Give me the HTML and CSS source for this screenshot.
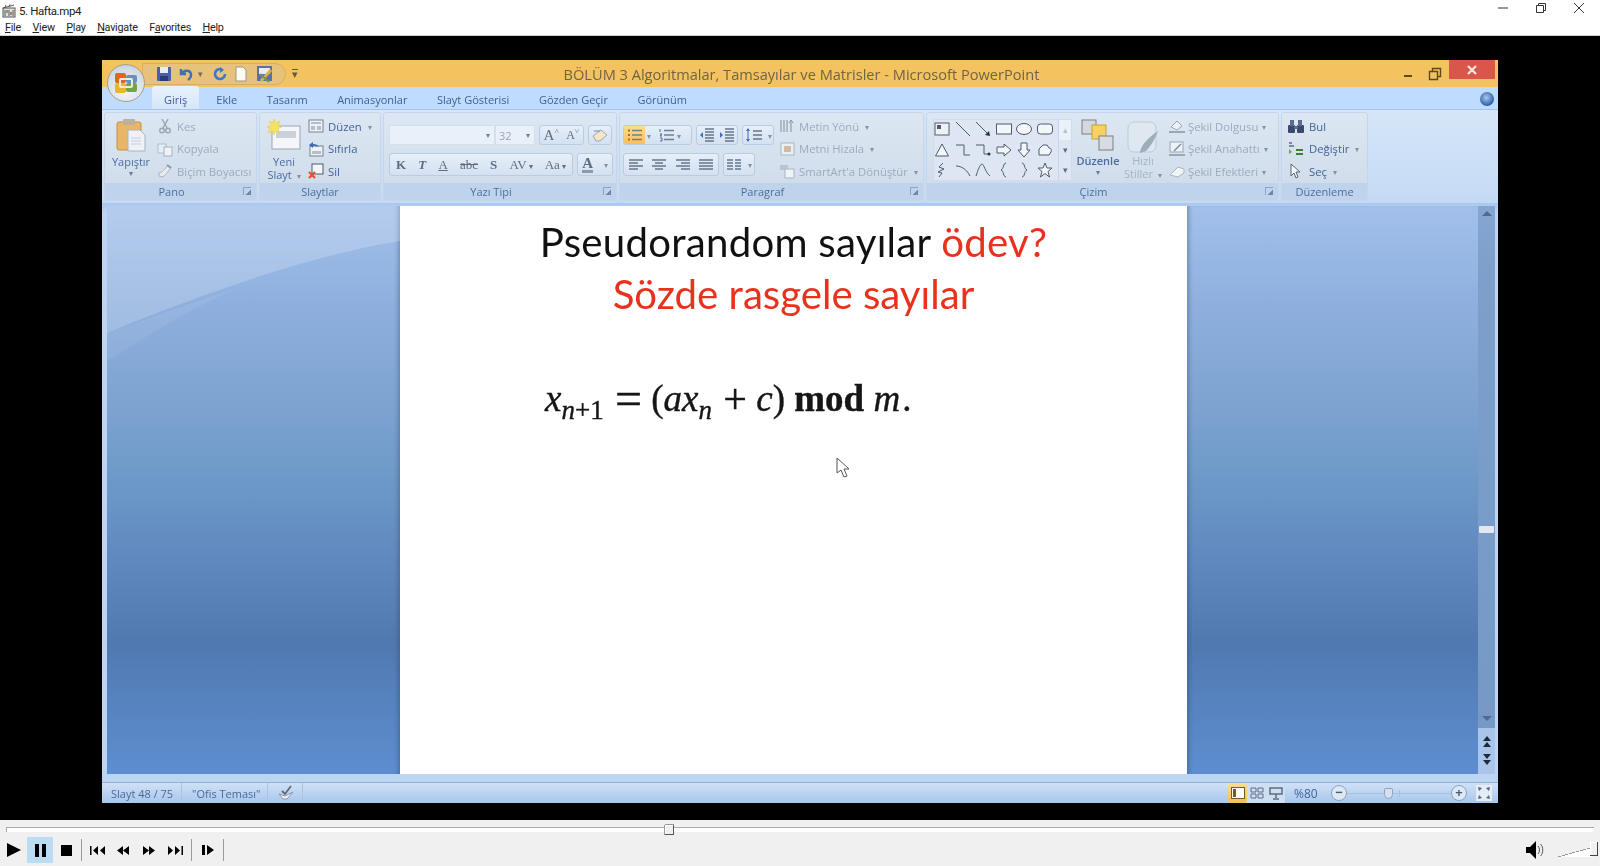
FILE: index.html

```html
<!DOCTYPE html>
<html lang="en">

<head>
    <meta charset="UTF-8">
    <meta name="viewport" content="width=device-width, initial-scale=1.0">
    <title>5. Hafta.mp4</title>
    <link rel="stylesheet" href="styles.css">
</head>

<body>
    <!-- player window chrome -->
    <header class="player-title">
        <svg class="app-icon" width="14" height="14" viewBox="0 0 14 14"><rect x="1" y="4" width="12" height="9" fill="#dfe3e6" stroke="#555"/><path d="M1 4l11-3M3 3.5l1-2.5M7 2.5l1-2M3 6v6M7 6v6M11 6v6" stroke="#555" fill="none"/><rect x="4" y="6" width="2" height="3" fill="#7fa66a"/><rect x="8" y="8" width="2" height="3" fill="#c07a55"/></svg>
        <span class="player-name">5. Hafta.mp4</span>
        <div class="win-buttons">
            <svg width="12" height="12" viewBox="0 0 12 12"><path d="M1 6h10" stroke="#333"/></svg>
            <svg width="12" height="12" viewBox="0 0 12 12"><path d="M1.5 3.5h7v7h-7zM3.5 3.5v-2h7v7h-2" stroke="#333" fill="none"/></svg>
            <svg width="12" height="12" viewBox="0 0 12 12"><path d="M1 1l10 10M11 1L1 11" stroke="#333" fill="none"/></svg>
        </div>
    </header>
    <nav class="player-menu">
        <span><u>F</u>ile</span>
        <span><u>V</u>iew</span>
        <span><u>P</u>lay</span>
        <span><u>N</u>avigate</span>
        <span>F<u>a</u>vorites</span>
        <span><u>H</u>elp</span>
    </nav>

    <main class="stage">
        <div class="ppt">
            <div class="office-btn">
                <svg width="28" height="28" viewBox="0 0 28 28">
                    <rect x="3" y="4" width="11" height="10" rx="2" fill="#d9672a"/>
                    <rect x="14" y="6" width="11" height="8" rx="2" fill="#5d93c9"/>
                    <rect x="3" y="14" width="11" height="10" rx="2" fill="#e7b52f"/>
                    <rect x="14" y="14" width="11" height="9" rx="2" fill="#73a63f"/>
                    <rect x="8" y="10" width="12" height="8" rx="1" fill="none" stroke="#f3ead2" stroke-width="2"/>
                </svg>
            </div>

            <div class="ppt-title">
                <div class="qat">
                    <svg width="16" height="16" viewBox="0 0 16 16"><rect x="1" y="1" width="14" height="14" rx="1" fill="#4a5fa8"/><rect x="4" y="1" width="8" height="6" fill="#e8edf5"/><rect x="4" y="10" width="8" height="5" fill="#2b3a78"/></svg>
                    <svg width="16" height="16" viewBox="0 0 16 16"><path d="M3 3v5h5M3.5 8C6 3.5 12 4 13 8c.5 2.5-1 4.5-3 6" stroke="#3f6fb5" stroke-width="2.4" fill="none"/></svg>
                    <span class="qat-arrow">▾</span>
                    <svg width="16" height="16" viewBox="0 0 16 16"><path d="M13 8a5 5 0 1 1-3-4.600" stroke="#3f78c9" stroke-width="2.6" fill="none"/><path d="M8 1l4 3-4 3z" fill="#3f78c9"/></svg>
                    <svg width="14" height="16" viewBox="0 0 14 16"><path d="M2 1h7l3 3v11H2z" fill="#fbfbf4" stroke="#9a9a80"/></svg>
                    <svg class="qat-last" width="18" height="18" viewBox="0 0 18 18"><rect x="1" y="1" width="15" height="15" fill="#5e6fa8"/><rect x="3" y="3" width="11" height="6" fill="#e8edf5"/><path d="M5 16L15 5" stroke="#d6b24a" stroke-width="3"/><path d="M4 9l9 8" stroke="#6f9a4c" stroke-width="2"/></svg>
                </div>
                <span class="qat-custom">▾</span>
                <span class="ppt-name">BÖLÜM 3 Algoritmalar, Tamsayılar ve Matrisler - Microsoft PowerPoint</span>
                <div class="ppt-controls">
                    <svg width="12" height="12" viewBox="0 0 12 12"><path d="M2 8h8" stroke="#5c4a1e" stroke-width="2"/></svg>
                    <svg width="14" height="14" viewBox="0 0 14 14"><path d="M1.500 4.500h8v8h-8zM4.500 4.500v-3h8v8h-3" stroke="#5c4a1e" stroke-width="1.400" fill="none"/></svg>
                    <div class="ppt-close"><svg width="10" height="10" viewBox="0 0 10 10"><path d="M1 1l8 8M9 1L1 9" stroke="#fbe6df" stroke-width="2.200"/></svg></div>
                </div>
            </div>

            <div class="tabs">
                <span class="tab tab-active">Giriş</span>
                <span class="tab">Ekle</span>
                <span class="tab">Tasarım</span>
                <span class="tab">Animasyonlar</span>
                <span class="tab">Slayt Gösterisi</span>
                <span class="tab">Gözden Geçir</span>
                <span class="tab">Görünüm</span>
                <span class="help-btn"></span>
            </div>

            <div class="ribbon">
                <!-- Pano -->
                <section class="group group-pano">
                    <div class="group-body">
                        <div class="big big-paste">
                            <svg width="30" height="34" viewBox="0 0 30 34"><rect x="1" y="4" width="24" height="28" rx="2" fill="#e9b569" stroke="#c48f45"/><rect x="7" y="1" width="12" height="6" rx="1" fill="#b9b2a0"/><path d="M12 12h12l5 5v16H12z" fill="#eef2f7" stroke="#a9b4c2"/><path d="M15 20h10M15 23h10M15 26h10" stroke="#c2ccd8"/></svg>
                            <span class="cmd-text blue">Yapıştır</span>
                            <span class="caret">▾</span>
                        </div>
                        <div class="cmds">
                            <div class="cmd off"><svg width="16" height="16" viewBox="0 0 16 16"><path d="M5 1l5 9M11 1L6 10" stroke="#9aa6b4" stroke-width="1.500"/><circle cx="5" cy="12.500" r="2.300" fill="none" stroke="#9aa6b4" stroke-width="1.400"/><circle cx="11" cy="12.500" r="2.300" fill="none" stroke="#9aa6b4" stroke-width="1.400"/></svg><span>Kes</span></div>
                            <div class="cmd off"><svg width="16" height="16" viewBox="0 0 16 16"><rect x="1" y="3" width="8" height="9" fill="#e6edf5" stroke="#b4bfcc"/><rect x="7" y="6" width="8" height="9" fill="#eef3f8" stroke="#a6b2c0"/></svg><span>Kopyala</span></div>
                            <div class="cmd off"><svg width="16" height="16" viewBox="0 0 16 16"><path d="M2 10c3 0 6-4 9-8l3 2c-2 4-5 7-8 10l-4-1z" fill="#e8edf3" stroke="#aab5c2"/><path d="M10 2l4 3" stroke="#8f9aa8" stroke-width="2"/></svg><span>Biçim Boyacısı</span></div>
                        </div>
                    </div>
                    <footer class="group-label has-launcher">Pano<i class="launcher"></i></footer>
                </section>

                <!-- Slaytlar -->
                <section class="group group-slides">
                    <div class="group-body">
                        <div class="big big-slide">
                            <svg width="34" height="32" viewBox="0 0 34 32"><rect x="5" y="7" width="28" height="23" fill="#f4f6f9" stroke="#9aa5b3"/><rect x="9" y="12" width="20" height="7" fill="#c9d1db"/><path d="M7 0l1.500 4L13 2l-2 4.500L15 8l-4 1.500L13 14l-4.500-2L7 16l-1.500-4L1 14l2-4.500L0 8l4-1.500L2 2l4 2z" fill="#f6e35c" stroke="#e9c53d" stroke-width=".5"/></svg>
                            <span class="cmd-text blue">Yeni</span>
                            <span class="cmd-text blue">Slayt <span class="caret-in">▾</span></span>
                        </div>
                        <div class="cmds">
                            <div class="cmd"><svg width="16" height="16" viewBox="0 0 16 16"><rect x="1" y="2" width="14" height="12" fill="#eef2f7" stroke="#77828f"/><rect x="3" y="4" width="10" height="2" fill="#b5bfca"/><rect x="3" y="8" width="4" height="4" fill="#b5bfca"/><rect x="9" y="8" width="4" height="4" fill="#b5bfca"/></svg><span>Düzen</span><span class="caret-in">▾</span></div>
                            <div class="cmd"><svg width="16" height="16" viewBox="0 0 16 16"><rect x="2" y="5" width="13" height="10" fill="#eef2f7" stroke="#77828f"/><rect x="4" y="10" width="9" height="3" fill="#b5bfca"/><path d="M1 4l4-3v2c3 0 5 1 6 3-2-1-4-1-6-1v2z" fill="#3c68b5"/></svg><span>Sıfırla</span></div>
                            <div class="cmd"><svg width="16" height="16" viewBox="0 0 16 16"><rect x="4" y="1" width="11" height="10" fill="#f3f5f8" stroke="#4e5a70"/><path d="M1 9l6 6M7 9l-6 6" stroke="#e2502e" stroke-width="2.200"/></svg><span>Sil</span></div>
                        </div>
                    </div>
                    <footer class="group-label">Slaytlar</footer>
                </section>

                <!-- Yazı Tipi -->
                <section class="group group-font">
                    <div class="group-body rows">
                        <div class="tool-row">
                            <div class="field field-font"><span class="caret">▾</span></div>
                            <div class="field field-size"><span class="field-val">32</span><span class="caret">▾</span></div>
                            <div class="btn-group grow-btn"><span class="serif big-a">A<sup>˄</sup></span><span class="serif small-a">A<sup>˅</sup></span></div>
                            <div class="btn-group clear-btn"><svg width="18" height="16" viewBox="0 0 18 16"><path d="M2 9l8-6 6 5-7 6H5z" fill="#f4e6c4" stroke="#9aa7b8"/><path d="M3 4h6" stroke="#6d86b0"/></svg></div>
                        </div>
                        <div class="tool-row">
                            <div class="btn-group fmt-btns">
                                <b class="serif">K</b>
                                <i class="serif"><b>T</b></i>
                                <u class="serif">A</u>
                                <s class="serif">abc</s>
                                <b class="serif">S</b>
                                <span class="serif av">AV<span class="caret-in">▾</span></span>
                                <span class="serif aa">Aa<span class="caret-in">▾</span></span>
                            </div>
                            <div class="btn-group color-btn"><span class="serif color-a">A</span><span class="caret-in">▾</span></div>
                        </div>
                    </div>
                    <footer class="group-label has-launcher">Yazı Tipi<i class="launcher"></i></footer>
                </section>

                <!-- Paragraf -->
                <section class="group group-para">
                    <div class="group-body para-body">
                        <div class="rows">
                            <div class="tool-row">
                                <div class="btn-group list-btn">
                                    <span class="ico-on"><svg width="16" height="14" viewBox="0 0 16 14"><path d="M5 2.500h10M5 7h10M5 11.500h10" stroke="#6f7f93" stroke-width="1.600"/><path d="M1 2.500h2M1 7h2M1 11.500h2" stroke="#d25a1e" stroke-width="2"/></svg></span>
                                    <span class="caret-in">▾</span>
                                    <span class="ico"><svg width="16" height="14" viewBox="0 0 16 14"><path d="M5 2.500h10M5 7h10M5 11.500h10" stroke="#6f7f93" stroke-width="1.600"/><path d="M1 1v3M1 6h2l-2 2h2M1 10h2v3H1" stroke="#4f6b9c" fill="none"/></svg></span>
                                    <span class="caret-in">▾</span>
                                </div>
                                <div class="btn-group indent-btn">
                                    <svg width="16" height="14" viewBox="0 0 16 14"><path d="M6 1h9M6 4h9M6 7h9M6 10h9M6 13h9" stroke="#66758a" stroke-width="1.300"/><path d="M4 4L1 7l3 3z" fill="#3f6fb5"/></svg>
                                    <svg width="16" height="14" viewBox="0 0 16 14"><path d="M6 1h9M6 4h9M6 7h9M6 10h9M6 13h9" stroke="#66758a" stroke-width="1.300"/><path d="M1 4l3 3-3 3z" fill="#3f6fb5"/></svg>
                                </div>
                                <div class="btn-group spacing-btn">
                                    <svg width="18" height="14" viewBox="0 0 18 14"><path d="M3 1v12" stroke="#3f6fb5"/><path d="M1 3l2-3 2 3zM1 11l2 3 2-3z" fill="#3f6fb5"/><path d="M8 3h9M8 7h9M8 11h9" stroke="#66758a" stroke-width="1.400"/></svg>
                                    <span class="caret-in">▾</span>
                                </div>
                            </div>
                            <div class="tool-row">
                                <div class="btn-group align-btn">
                                    <svg width="16" height="14" viewBox="0 0 16 14"><path d="M1 2h14M1 5h9M1 8h14M1 11h9" stroke="#66758a" stroke-width="1.500"/></svg>
                                    <svg width="16" height="14" viewBox="0 0 16 14"><path d="M1 2h14M4 5h8M1 8h14M4 11h8" stroke="#66758a" stroke-width="1.500"/></svg>
                                    <svg width="16" height="14" viewBox="0 0 16 14"><path d="M1 2h14M6 5h9M1 8h14M6 11h9" stroke="#66758a" stroke-width="1.500"/></svg>
                                    <svg width="16" height="14" viewBox="0 0 16 14"><path d="M1 2h14M1 5h14M1 8h14M1 11h14" stroke="#66758a" stroke-width="1.500"/></svg>
                                </div>
                                <div class="btn-group col-btn">
                                    <svg width="16" height="14" viewBox="0 0 16 14"><path d="M1 2h6M9 2h6M1 5h6M9 5h6M1 8h6M9 8h6M1 11h6M9 11h6" stroke="#66758a" stroke-width="1.500"/></svg>
                                    <span class="caret-in">▾</span>
                                </div>
                            </div>
                        </div>
                        <div class="cmds para-cmds">
                            <div class="cmd off"><svg width="16" height="16" viewBox="0 0 16 16"><path d="M2 2v12M5 2v12M8 2v12" stroke="#7f8ea2"/><path d="M12 14V4M10 5l2-3 2 3" stroke="#7f8ea2" fill="none"/></svg><span>Metin Yönü</span><span class="caret-in">▾</span></div>
                            <div class="cmd off"><svg width="16" height="16" viewBox="0 0 16 16"><rect x="2" y="2" width="13" height="12" fill="#eaf0f6" stroke="#a9b5c3"/><path d="M5 6h7M5 8h7M5 10h7" stroke="#b2894f"/></svg><span>Metni Hizala</span><span class="caret-in">▾</span></div>
                            <div class="cmd off"><svg width="16" height="16" viewBox="0 0 16 16"><path d="M1 2h8v5H1z" fill="#b8c4d2"/><rect x="6" y="6" width="9" height="9" fill="#eef3f8" stroke="#a9b5c3"/></svg><span>SmartArt'a Dönüştür</span><span class="caret-in">▾</span></div>
                        </div>
                    </div>
                    <footer class="group-label has-launcher">Paragraf<i class="launcher"></i></footer>
                </section>

                <!-- Çizim -->
                <section class="group group-draw">
                    <div class="group-body draw-body">
                        <div class="shapes">
                            <div class="shape-grid">
                                <svg viewBox="0 0 16 16"><rect x="1" y="2" width="14" height="12" fill="#eef2f7" stroke="#4e5b6e"/><rect x="3" y="4" width="4" height="4" fill="#4e5b6e"/></svg>
                                <svg viewBox="0 0 16 16"><path d="M1 1l14 14" stroke="#4e5b6e"/></svg>
                                <svg viewBox="0 0 16 16"><path d="M1 1l12 12" stroke="#4e5b6e"/><path d="M15 15l-5-1 4-4z" fill="#26303e"/></svg>
                                <svg viewBox="0 0 16 16"><rect x=".5" y="3" width="15" height="10" fill="#f3f6fa" stroke="#4e5b6e"/></svg>
                                <svg viewBox="0 0 16 16"><ellipse cx="8" cy="8" rx="7.500" ry="5.500" fill="#f3f6fa" stroke="#4e5b6e"/></svg>
                                <svg viewBox="0 0 16 16"><rect x=".5" y="3" width="15" height="10" rx="3" fill="#f3f6fa" stroke="#4e5b6e"/></svg>
                                <svg viewBox="0 0 16 16"><path d="M8 2l6.500 12h-13z" fill="#f3f6fa" stroke="#4e5b6e"/></svg>
                                <svg viewBox="0 0 16 16"><path d="M1 3h8v10h6" fill="none" stroke="#4e5b6e"/></svg>
                                <svg viewBox="0 0 16 16"><path d="M1 3h8v9h4" fill="none" stroke="#4e5b6e"/><circle cx="14" cy="12" r="1.500" fill="#26303e"/></svg>
                                <svg viewBox="0 0 16 16"><path d="M1 5h7V2l7 6-7 6v-3H1z" fill="#f3f6fa" stroke="#4e5b6e"/></svg>
                                <svg viewBox="0 0 16 16"><path d="M5 1h6v7h3l-6 7-6-7h3z" fill="#f3f6fa" stroke="#4e5b6e"/></svg>
                                <svg viewBox="0 0 16 16"><path d="M2 13V7l4-4h4l2 3c2 0 3 2 2 4l-2 3z" fill="#f3f6fa" stroke="#4e5b6e"/></svg>
                                <svg viewBox="0 0 16 16"><path d="M9 1L5 5l5 2-6 3 4 1-3 4" fill="none" stroke="#4e5b6e"/></svg>
                                <svg viewBox="0 0 16 16"><path d="M1 4c6 0 11 4 14 10" fill="none" stroke="#4e5b6e"/></svg>
                                <svg viewBox="0 0 16 16"><path d="M1 14C3 8 5 2 7 2s3 8 8 12" fill="none" stroke="#4e5b6e"/></svg>
                                <svg viewBox="0 0 16 16"><path d="M10 1C7 1 8 7 5 8c3 1 2 7 5 7" fill="none" stroke="#4e5b6e"/></svg>
                                <svg viewBox="0 0 16 16"><path d="M6 1c3 0 2 6 5 7-3 1-2 7-5 7" fill="none" stroke="#4e5b6e"/></svg>
                                <svg viewBox="0 0 16 16"><path d="M8 1l2 5h5l-4 3.500L12.500 15 8 11.500 3.500 15 5 9.500 1 6h5z" fill="#f3f6fa" stroke="#4e5b6e"/></svg>
                            </div>
                            <div class="shape-scroll">
                                <span class="up">▴</span>
                                <span>▾</span>
                                <span>▾</span>
                            </div>
                        </div>
                        <div class="big big-arrange">
                            <svg width="34" height="32" viewBox="0 0 34 32"><rect x="1" y="1" width="14" height="14" fill="#d4d8dd" stroke="#7a8088"/><rect x="11" y="6" width="14" height="14" fill="#f5d35e" stroke="#c2a23a"/><rect x="18" y="17" width="14" height="14" fill="#d8dce0" stroke="#7a8088"/></svg>
                            <span class="cmd-text blue arrange-label">Düzenle</span>
                            <span class="caret">▾</span>
                        </div>
                        <div class="big big-quick">
                            <svg width="34" height="34" viewBox="0 0 34 34"><rect x="2" y="1" width="28" height="30" rx="6" fill="#dfe8f1" stroke="#bcc9d6"/><path d="M14 32c0-6 6-14 18-22-4 10-8 16-12 20z" fill="#9eacbb"/></svg>
                            <span class="cmd-text">Hızlı</span>
                            <span class="cmd-text">Stiller <span class="caret-in">▾</span></span>
                        </div>
                        <div class="cmds">
                            <div class="cmd off"><svg width="18" height="16" viewBox="0 0 18 16"><path d="M3 9l6-6 5 5-5 4z" fill="#eef2f6" stroke="#98a5b4"/><rect x="1" y="13" width="16" height="2" fill="#9aa7b6"/></svg><span>Şekil Dolgusu</span><span class="caret-in">▾</span></div>
                            <div class="cmd off"><svg width="18" height="16" viewBox="0 0 18 16"><rect x="2" y="1" width="13" height="10" fill="#eef2f6" stroke="#98a5b4"/><path d="M6 10l7-7" stroke="#7f8c9c" stroke-width="1.500"/><rect x="1" y="13" width="16" height="2" fill="#9aa7b6"/></svg><span>Şekil Anahattı</span><span class="caret-in">▾</span></div>
                            <div class="cmd off"><svg width="18" height="16" viewBox="0 0 18 16"><path d="M2 12l8-8 6 2v4l-6 4z" fill="#f1f4f7" stroke="#aab6c3"/></svg><span>Şekil Efektleri</span><span class="caret-in">▾</span></div>
                        </div>
                    </div>
                    <footer class="group-label has-launcher">Çizim<i class="launcher"></i></footer>
                </section>

                <!-- Düzenleme -->
                <section class="group group-edit">
                    <div class="group-body">
                        <div class="cmds">
                            <div class="cmd"><svg width="18" height="16" viewBox="0 0 18 16"><rect x="1" y="7" width="7" height="8" rx="1" fill="#3a4a6a"/><rect x="10" y="7" width="7" height="8" rx="1" fill="#3a4a6a"/><rect x="3" y="2" width="4" height="6" fill="#5b6c8c"/><rect x="11" y="2" width="4" height="6" fill="#5b6c8c"/><rect x="7" y="8" width="4" height="3" fill="#5b6c8c"/></svg><span>Bul</span></div>
                            <div class="cmd"><svg width="18" height="16" viewBox="0 0 18 16"><path d="M2 5h5M2 2h3" stroke="#5b6c8c" stroke-width="1.500"/><path d="M2 8l3 3-3 2z" fill="#6fa64a"/><path d="M9 9h7M9 13h7" stroke="#3f7d30" stroke-width="2"/></svg><span>Değiştir</span><span class="caret-in">▾</span></div>
                            <div class="cmd"><svg width="18" height="16" viewBox="0 0 18 16"><path d="M4 1v12l3-3 2 5 2-1-2-5h4z" fill="#f5f7fa" stroke="#56657a"/></svg><span>Seç</span><span class="caret-in">▾</span></div>
                        </div>
                    </div>
                    <footer class="group-label">Düzenleme</footer>
                </section>
            </div>

            <div class="workspace">
                <div class="side side-left"></div>
                <article class="slide">
                    <h1 class="slide-title slide-title-first">Pseudorandom sayılar <span class="red">ödev?</span></h1>
                    <h2 class="slide-title red">Sözde rasgele sayılar</h2>
                    <p class="formula"><i>x</i><sub><i>n</i>+1</sub> <span class="op op-eq">=</span> (<i>ax</i><sub><i>n</i></sub> <span class="op">+</span> <i>c</i>) <b>mod</b> <i>m</i> <span class="dot">.</span></p>
                    <svg class="cursor" width="14" height="21" viewBox="0 0 14 21"><path d="M1 1v15l4-3 3 7 3-1-3-7h5z" fill="#fff" stroke="#555"/></svg>
                </article>
                <div class="side side-right"></div>
                <div class="scroll">
                    <span class="scroll-up"></span>
                    <span class="scroll-thumb"></span>
                    <span class="scroll-down"></span>
                    <div class="scroll-pages">
                        <svg width="10" height="13" viewBox="0 0 10 13"><path d="M5 0l4 5H1zM5 6l4 5H1z" fill="#1d2a3c"/></svg>
                        <svg width="10" height="13" viewBox="0 0 10 13"><path d="M1 1h8L5 6zM1 7h8l-4 5z" fill="#1d2a3c"/></svg>
                    </div>
                </div>
            </div>

            <footer class="status">
                <span class="st-item st-slide">Slayt 48 / 75</span>
                <span class="st-item st-theme">"Ofis Teması"</span>
                <span class="st-item st-check"><svg width="18" height="16" viewBox="0 0 18 16"><path d="M2 9l6 2 8-4-6 7H6z" fill="#eef1f5" stroke="#8c97a4"/><path d="M5 6l3 3 6-8" stroke="#5d6a7a" stroke-width="1.800" fill="none"/></svg></span>
                <span class="st-fill"></span>
                <div class="views">
                    <span class="view view-on"><svg width="14" height="12" viewBox="0 0 14 12"><rect x=".5" y=".5" width="13" height="11" fill="#fff" stroke="#7b5a20"/><rect x="2" y="2" width="3" height="8" fill="#7b5a20"/></svg></span>
                    <span class="view"><svg width="14" height="12" viewBox="0 0 14 12"><path d="M1 1h5v4H1zM8 1h5v4H8zM1 7h5v4H1zM8 7h5v4H8z" fill="none" stroke="#5f6d80"/></svg></span>
                    <span class="view"><svg width="14" height="13" viewBox="0 0 14 13"><rect x="1" y="1" width="12" height="6" fill="none" stroke="#5f6d80" stroke-width="1.500"/><path d="M7 7v4M4 12h6" stroke="#5f6d80" stroke-width="1.500"/></svg></span>
                </div>
                <span class="zoom-val">%80</span>
                <div class="zoom-slider">
                    <span class="zoom-round">−</span>
                    <div class="zoom-track"><span class="zoom-tick"></span><span class="zoom-thumb"></span></div>
                    <span class="zoom-round">+</span>
                </div>
                <span class="fit-btn"><svg width="14" height="14" viewBox="0 0 14 14"><path d="M1 1l4 1-3 3zM13 1l-1 4-3-3zM1 13l1-4 3 3zM13 13l-4-1 3-3z" fill="#55657a"/></svg></span>
            </footer>
        </div>
    </main>

    <footer class="controls">
        <div class="seek"><span class="seek-thumb"></span></div>
        <div class="buttons">
            <span class="ctl ctl-play"><svg width="14" height="14" viewBox="0 0 14 14"><path d="M0 0l14 7-14 7z"/></svg></span>
            <span class="ctl ctl-pause"><svg width="11" height="13" viewBox="0 0 11 13"><path d="M0 0h4v13H0zM7 0h4v13H7z"/></svg></span>
            <span class="ctl ctl-stop"><svg width="11" height="11" viewBox="0 0 11 11"><path d="M0 0h11v11H0z"/></svg></span>
            <i class="sep sep-a"></i>
            <span class="ctl ctl-step"><svg width="15" height="9" viewBox="0 0 15 9"><path d="M0 0h1.500v9H0zM8 0v9L3 4.500zM15 0v9l-5-4.500z"/></svg></span>
            <span class="ctl ctl-step"><svg width="12" height="9" viewBox="0 0 12 9"><path d="M6 0v9L0 4.500zM12 0v9L6 4.500z"/></svg></span>
            <span class="ctl ctl-step"><svg width="12" height="9" viewBox="0 0 12 9"><path d="M0 0v9l6-4.500zM6 0v9l6-4.500z"/></svg></span>
            <span class="ctl ctl-step"><svg width="15" height="9" viewBox="0 0 15 9"><path d="M0 0v9l5-4.500zM7 0v9l5-4.500zM13.500 0H15v9h-1.500z"/></svg></span>
            <i class="sep sep-b"></i>
            <span class="ctl ctl-frame"><svg width="12" height="10" viewBox="0 0 12 10"><path d="M0 0h3v10H0zM5 0v10l7-5z"/></svg></span>
            <i class="sep sep-c"></i>
            <span class="ctl-fill"></span>
            <svg class="speaker" width="20" height="18" viewBox="0 0 20 18"><path d="M0 6h4l6-6v18l-6-6H0z"/><path d="M12 5c2 2 2 6 0 8M14.500 3c3 3 3 9 0 12" stroke="#555" fill="none"/></svg>
            <div class="volume"><span class="vol-line"></span><span class="vol-thumb"></span></div>
        </div>
    </footer>
</body>

</html>
```

FILE: styles.css

```css
* {
    box-sizing: border-box;
}

html,
body {
    height: 100%;
}

body {
    margin: 0;
    font-family: "Open Sans", "Noto Sans", sans-serif;
    background: #000;
    overflow: hidden;
}

svg {
    display: block;
    flex: none;
}

/* player chrome */
.player-title {
    display: flex;
    align-items: center;
    height: 21px;
    padding-left: 2px;
    background: #fff;
    font-family: Roboto, sans-serif;
    font-size: 11.5px;
    color: #222;
}

.player-name {
    margin-left: 3px;
    letter-spacing: -0.4px;
}

.win-buttons {
    margin-left: auto;
    display: flex;
    gap: 26px;
    padding-right: 15px;
    margin-top: -5px;
}

.player-menu {
    display: flex;
    align-items: center;
    height: 15px;
    padding: 0 0 2px 5px;
    background: #fff;
    border-bottom: 1px solid #d0d0d0;
    font-family: Roboto, sans-serif;
    font-size: 10.8px;
    letter-spacing: -0.25px;
    color: #222;
    gap: 11.5px;
}

.stage {
    height: 784px;
    background: #000;
    padding: 24px 102px 17px;
}

.controls {
    height: 46px;
    background: #f0f0f0;
    position: relative;
}

/* powerpoint window */
.ppt {
    position: relative;
    display: flex;
    flex-direction: column;
    height: 743px;
    background: #bdd5f3;
    filter: blur(0.45px);
    font-size: 11px;
    color: #41639a;
}

.ppt-title {
    display: flex;
    align-items: center;
    height: 27px;
    background: #f4c25e;
    padding-left: 40px;
}

.office-btn {
    position: absolute;
    left: 5px;
    top: 4px;
    width: 38px;
    height: 38px;
    border-radius: 50%;
    border: 1px solid #a8a08a;
    background: radial-gradient(circle at 50% 70%, #f4f7fb, #cfd9e4 75%, #97a2ad);
    display: flex;
    align-items: center;
    justify-content: center;
    z-index: 2;
}

.qat {
    display: flex;
    flex: none;
    align-items: center;
    gap: 6px;
    height: 22px;
    padding: 0 0 0 13px;
    border-radius: 0 11px 11px 0;
    background: #e7c27a;
    border: 1px solid #d8ae5d;
    width: 144px;
}

.qat-arrow {
    font-size: 9px;
    color: #6d6a5c;
    margin: 0 3px 0 -2px;
}

.qat-last {
    margin-left: 2px;
}

.qat-custom {
    flex: none;
    font-size: 11px;
    color: #5c5a50;
    margin-left: 6px;
    border-top: 1px solid #5c5a50;
    line-height: 8px;
}

.ppt-name {
    flex: 1;
    text-align: center;
    font-size: 14.6px;
    color: #6f6446;
    padding-right: 97px;
    white-space: nowrap;
}

.ppt-controls {
    display: flex;
    flex: none;
    align-items: center;
    height: 27px;
}

.ppt-controls > svg:first-child {
    margin-right: 14px;
}

.ppt-close {
    flex: none;
    margin-left: 7px;
    margin-right: 3px;
    width: 46px;
    height: 19px;
    align-self: flex-start;
    background: #d9574a;
    display: flex;
    align-items: center;
    justify-content: center;
}

.tabs {
    display: flex;
    align-items: flex-end;
    height: 23px;
    padding-left: 50px;
    background: #bfdbfd;
    border-bottom: 1px solid #a5c4ea;
    position: relative;
}

.tab {
    height: 23px;
    padding: 6px 14px 0;
    color: #3d5f97;
    font-size: 11px;
    margin-right: 1.5px;
}

.tab-active {
    padding: 6px 12px 0;
    background: linear-gradient(#e8f2fd, #d6e6f8);
    border-radius: 3px 3px 0 0;
    margin-right: 3px;
}

.help-btn {
    position: absolute;
    right: 4px;
    top: 5px;
    width: 14px;
    height: 14px;
    border-radius: 50%;
    background: radial-gradient(circle at 45% 40%, #a9c8ef, #2f5fa8 70%);
}

.ribbon {
    display: flex;
    gap: 4px;
    height: 93px;
    padding: 3px 1px 3px 3px;
    background: linear-gradient(#d6e6f9, #c4daf4);
}

.group {
    display: flex;
    flex-direction: column;
    background: linear-gradient(#dde7f3, #d3dfec 65%, #cbd9e9);
    border-radius: 3px;
    box-shadow: 0 0 0 1px #c6d6e8;
}

.group-pano { width: 151px; }
.group-slides { width: 120px; }
.group-font { width: 232px; }
.group-para { width: 303px; }
.group-draw { width: 351px; }
.group-edit { width: 85px; }

.group-body {
    flex: 1;
    display: flex;
    height: 70px;
}

.group-label {
    position: relative;
    height: 17px;
    line-height: 18px;
    text-align: center;
    background: #bfd4ec;
    border-radius: 0 0 3px 3px;
    color: #4c6f9f;
    font-size: 11px;
}

.has-launcher {
    padding-right: 18px;
}

.launcher {
    position: absolute;
    right: 5px;
    top: 4px;
    width: 8px;
    height: 8px;
    border: 1px solid #8ea5c2;
    border-width: 1px 0 0 1px;
    background: linear-gradient(135deg, transparent 60%, #6f88a8 60%);
}

.big {
    display: flex;
    flex-direction: column;
    align-items: center;
    line-height: 13px;
    font-size: 11px;
}

.big-paste {
    width: 52px;
    padding-top: 5px;
}

.big-paste svg {
    margin-bottom: 3px;
}

.big-slide {
    width: 48px;
    padding-top: 6px;
}

.big-slide svg {
    margin-bottom: 4px;
}

.cmd-text {
    white-space: nowrap;
}

.blue {
    color: #4a6da4;
}

.caret {
    font-size: 8px;
    color: #6a7d96;
    line-height: 10px;
}

.caret-in {
    font-size: 8px;
    color: #8394aa;
    margin-left: 2px;
}

.cmds {
    display: flex;
    flex-direction: column;
    padding-top: 2px;
}

.cmd {
    display: flex;
    align-items: center;
    gap: 4px;
    height: 22.5px;
    white-space: nowrap;
    font-size: 11.3px;
    color: #41639a;
}

.cmd.off {
    color: #9cabbd;
}

.group-edit .cmds { padding-left: 5px; }

/* font and paragraph tool rows */
.rows {
    display: flex;
    flex-direction: column;
    gap: 8px;
    padding: 12px 0 0 5px;
}

.tool-row {
    display: flex;
    gap: 4px;
    align-items: stretch;
}

.tool-row:first-child { height: 20px; }
.tool-row:last-child { height: 23px; }

.field {
    display: flex;
    align-items: center;
    justify-content: flex-end;
    height: 20px;
    padding-right: 4px;
    background: #e9f0f9;
    border: 1px solid #d3dfee;
}

.field-font {
    width: 106px;
    margin-right: -4px;
}

.field-size {
    width: 40px;
    justify-content: space-between;
    padding-left: 3px;
}

.field-val {
    color: #97a6b8;
    font-size: 11px;
}

.btn-group {
    display: flex;
    align-items: center;
    justify-content: space-around;
    border: 1px solid #b9cce3;
    border-radius: 3px;
    background: linear-gradient(#e6eff9, #d4e1f1);
    color: #5d6d83;
}

.serif {
    font-family: "Liberation Serif", serif;
    font-size: 13px;
}

.grow-btn { width: 45px; }
.clear-btn { width: 24px; }
.fmt-btns { width: 184px; }
.color-btn { width: 36px; }

.big-a { font-size: 15px; }
.small-a { font-size: 12px; }

.btn-group sup {
    font-size: 8px;
    line-height: 0;
    color: #3f6fb5;
}

.fmt-btns b,
.fmt-btns i,
.fmt-btns u,
.fmt-btns s,
.fmt-btns span {
    color: #5d6d83;
}

.color-a {
    font-size: 15px;
    font-weight: bold;
    border-bottom: 3px solid #8f9aa8;
    line-height: 14px;
}

.para-body {
    gap: 5px;
}

.para-body .rows {
    gap: 8px;
    padding-left: 3px;
}

.list-btn { width: 69px; justify-content: flex-start; }
.indent-btn { width: 42px; }
.spacing-btn { width: 32px; }
.align-btn { width: 96px; }
.col-btn { width: 32px; }

.ico-on {
    display: flex;
    align-items: center;
    justify-content: center;
    width: 21px;
    height: 100%;
    background: linear-gradient(#fbdc8e, #f7bf5a);
    border-radius: 2px 0 0 2px;
}

.ico {
    margin-left: 8px;
}

/* shapes gallery */
.draw-body {
    padding: 6px 0 0 6px;
}

.shapes {
    display: flex;
    flex: none;
    width: 139px;
    height: 62px;
    background: #dde6f2;
    border: 1px solid #cfdcec;
}

.shape-grid {
    display: grid;
    grid-template-columns: repeat(6, 16px);
    grid-auto-rows: 16px;
    column-gap: 4.6px;
    row-gap: 4.5px;
    padding: 1px 0 0 0;
    width: 124px;
}

.shape-grid svg {
    width: 16px;
    height: 16px;
}

.shape-scroll {
    display: flex;
    flex-direction: column;
    width: 13px;
    font-size: 9px;
    color: #5d6d83;
    text-align: center;
}

.shape-scroll span {
    flex: 1;
    line-height: 19px;
    border-left: 1px solid #c5d6ea;
}

.shape-scroll .up {
    background: #eaf1f9;
    color: #b3c0d0;
}

.big-arrange {
    width: 46px;
    padding-top: 0;
    margin-left: 3px;
}

.big-arrange svg {
    margin-bottom: 3px;
}

.arrange-label {
    font-weight: 600;
}

.big-quick {
    width: 40px;
    padding-top: 2px;
    margin-left: 2px;
    color: #a5b3c4;
}

.big-quick svg {
    margin-bottom: -1px;
}

.draw-body .cmds {
    margin: -6px 0 0 5px;
}

.draw-body .cmd {
    gap: 2px;
}

/* slide area */
.workspace {
    flex: 1;
    display: flex;
    padding: 3px 3px 8px 5px;
    background: linear-gradient(#a9c8ee, #bdd5f3 10px);
    min-height: 0;
}

.side {
    position: relative;
    background: linear-gradient(#a2c0ea, #8fb0de 17%, #7fa4d2 34%, #6d99c8 48%, #6089bf 62%, #5079b0 77%, #5e8ed0);
}

.side-left {
    width: 293px;
    box-shadow: inset -5px 0 4px -3px rgba(40, 60, 90, 0.35);
}

.side-left::before,
.side-left::after {
    content: "";
    position: absolute;
    inset: 0;
}

.side-left::before {
    background: rgba(255, 255, 255, 0.2);
    clip-path: path("M0 0H293V35C200 50 90 90 0 127Z");
}

.side-left::after {
    background: rgba(255, 255, 255, 0.07);
    clip-path: path("M0 127C60 105 120 85 160 72C110 85 50 125 0 155Z");
}

.side-right {
    width: 291px;
    box-shadow: inset 5px 0 4px -3px rgba(40, 60, 90, 0.35);
}

.slide {
    position: relative;
    width: 787px;
    background: #fff;
    padding-top: 10px;
    text-align: center;
    font-family: Lato, "Open Sans", sans-serif;
}

.slide-title {
    margin: 0;
    font-size: 40.2px;
    line-height: 52px;
    font-weight: 400;
    color: #111;
}

.slide-title-first {
    letter-spacing: 0.25px;
}

.slide .red {
    color: #e8321e;
}

.formula {
    margin: 53px 0 0 145px;
    text-align: left;
    font-family: "Liberation Serif", serif;
    font-size: 37px;
    line-height: 52px;
    color: #161616;
    white-space: nowrap;
    -webkit-text-stroke: 0.4px #161616;
}

.formula sub {
    font-size: 27px;
    line-height: 0;
    vertical-align: -8px;
    margin-right: 2px;
}

.formula .op {
    font-size: 42px;
    line-height: 0;
    vertical-align: -2px;
}

.formula .op-eq {
    font-size: 48px;
    vertical-align: -4px;
}

.formula .dot {
    margin-left: -7px;
}

.cursor {
    position: absolute;
    left: 436px;
    top: 251px;
}

.scroll {
    position: relative;
    width: 17px;
    background: linear-gradient(#85a6d2, #7d9fca 12%, #7698c6);
}

.scroll-up,
.scroll-down {
    position: absolute;
    left: 4px;
    border-left: 5px solid transparent;
    border-right: 5px solid transparent;
}

.scroll-up {
    top: 5px;
    border-bottom: 5px solid #52688c;
}

.scroll-down {
    bottom: 53px;
    border-top: 5px solid #52688c;
}

.scroll-thumb {
    position: absolute;
    left: 1px;
    right: 1px;
    top: 320px;
    height: 7px;
    background: #e2e8ef;
    border-radius: 1px;
}

.scroll-pages {
    position: absolute;
    left: 0;
    right: 0;
    bottom: 0;
    height: 46px;
    background: #a9c5ea;
    display: flex;
    flex-direction: column;
    align-items: center;
    gap: 4px;
    padding-top: 8px;
}

/* status bar */
.status {
    display: flex;
    align-items: center;
    height: 21px;
    padding-right: 6px;
    background: linear-gradient(#cfe1f7, #a8c6ec);
    border-top: 1px solid #8fb0dc;
    font-size: 11px;
    color: #4c6a94;
}

.st-item {
    display: flex;
    align-items: center;
    height: 100%;
    border-right: 1px solid #a9c3e2;
}

.st-slide {
    width: 80px;
    padding-left: 9px;
}

.st-theme {
    width: 86px;
    padding-left: 10px;
}

.st-check {
    width: 35px;
    padding-left: 9px;
}

.st-fill {
    flex: 1;
}

.views {
    display: flex;
    height: 19px;
    width: 57px;
    background: #cfdff3;
    border-radius: 2px;
}

.view {
    flex: 1;
    display: flex;
    align-items: center;
    justify-content: center;
}

.view-on {
    background: linear-gradient(#fbdc8e, #f4bd5a);
    border-radius: 2px;
}

.zoom-val {
    margin-left: 9px;
    width: 37px;
    font-size: 12px;
    color: #42659c;
}

.zoom-slider {
    display: flex;
    align-items: center;
}

.zoom-round {
    width: 16px;
    height: 16px;
    border: 1px solid #8ea2bc;
    border-radius: 50%;
    background: #dde8f5;
    color: #4a5b72;
    text-align: center;
    line-height: 13px;
    font-size: 13px;
    font-weight: bold;
}

.zoom-track {
    position: relative;
    width: 104px;
    height: 1px;
    background: #a9bfda;
}

.zoom-tick {
    position: absolute;
    left: 52px;
    top: -3px;
    width: 1px;
    height: 7px;
    background: #a9bfda;
}

.zoom-thumb {
    position: absolute;
    left: 37px;
    top: -5px;
    width: 9px;
    height: 11px;
    background: #d5e1f0;
    border: 1px solid #8ea2bc;
    border-radius: 2px 2px 5px 5px;
}

.fit-btn {
    display: flex;
    align-items: center;
    justify-content: center;
    width: 16px;
    height: 16px;
    margin-left: 9px;
    background: #e4ecf6;
}

/* player controls */
.seek {
    position: absolute;
    left: 6px;
    right: 6px;
    top: 7px;
    height: 5px;
    background: #fff;
    border-top: 1px solid #aaa;
    border-left: 1px solid #aaa;
}

.seek-thumb {
    position: absolute;
    left: 658px;
    top: -3px;
    width: 9px;
    height: 10px;
    background: #f0f0f0;
    border: 1px solid #555;
    border-width: 0 1px 1px 0;
    box-shadow: inset 1px 1px 0 #fff, -1px 0 0 #999, 0 -1px 0 #999;
}

.buttons {
    position: absolute;
    left: 0;
    right: 0;
    top: 17px;
    height: 26px;
    display: flex;
    align-items: center;
}

.ctl {
    display: flex;
    flex: none;
    align-items: center;
    justify-content: center;
    height: 26px;
}

.ctl-play { width: 27px; padding-left: 1px; }
.ctl-pause { width: 26px; background: #bcdcf4; }
.ctl-stop { width: 26px; }
.ctl-step { width: 26px; }
.ctl-frame { width: 26px; }

.sep {
    flex: none;
    width: 1px;
    height: 22px;
    background: #9a9a9a;
}

.sep-a { margin: 0 2px; }
.sep-b { margin: 0 3px; }
.sep-c { margin-left: 2px; }

.ctl-fill {
    flex: 1;
}

.speaker {
    margin-right: 11px;
}

.volume {
    position: relative;
    width: 42px;
    height: 16px;
    margin-right: 1px;
}

.vol-line {
    position: absolute;
    left: 0;
    right: 6px;
    bottom: 1px;
    height: 10px;
    background: linear-gradient(to bottom right, transparent 49%, #999 49% 53%, #fff 53%);
}

.vol-thumb {
    position: absolute;
    right: 1px;
    top: 0;
    width: 8px;
    height: 14px;
    background: #f0f0f0;
    border: 1px solid #444;
    border-width: 0 1px 1px 0;
    box-shadow: inset 1px 1px 0 #fff;
}
```
